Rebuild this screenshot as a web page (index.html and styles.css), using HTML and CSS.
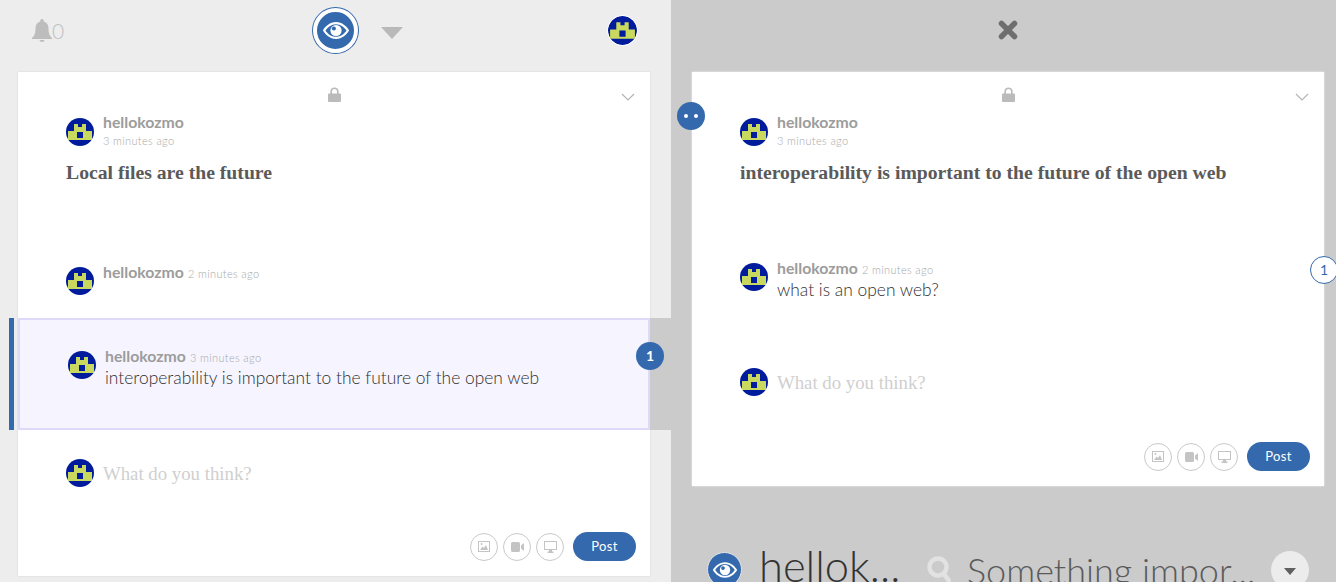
FILE: index.html
```html
<!DOCTYPE html>
<html lang="en">
<head>
    <meta charset="UTF-8">
    <title>Thread</title>
    <meta name="viewport" content="width=device-width, initial-scale=1">
    <link rel="stylesheet" href="styles.css">
</head>
<body>
    <svg class="defs" width="0" height="0">
        <symbol id="avatar" viewBox="0 0 28 28">
            <circle cx="14" cy="14" r="14" fill="#001b9c"/>
            <path fill="#c9d95f" d="M8 6h4v3h4V6h4v7h6v9H2v-9h6z"/>
            <path fill="#001b9c" d="M11 14h6v6h-6z"/>
        </symbol>
        <symbol id="eye" viewBox="0 0 30 20">
            <path fill="#fff" d="M15 1C8.500 1 3.500 5.500 1 10c2.500 4.500 7.500 9 14 9s11.500-4.500 14-9c-2.500-4.500-7.500-9-14-9zm0 2.200c5 0 9 3.300 11.300 6.800-2.300 3.500-6.300 6.800-11.300 6.800S6 13.500 3.700 10C6 6.500 10 3.200 15 3.200z"/>
            <circle cx="15" cy="10" r="6" fill="#fff"/>
            <circle cx="12.700" cy="7.800" r="2.200" fill="#346aad"/>
        </symbol>
        <symbol id="lock" viewBox="0 0 14 16">
            <path fill="#bbb" d="M1 7h1.500V4.800C2.500 2.200 4.500.5 7 .5s4.500 1.700 4.500 4.300V7H13a1 1 0 0 1 1 1v7a1 1 0 0 1-1 1H1a1 1 0 0 1-1-1V8a1 1 0 0 1 1-1zm3.300 0h5.400V4.800C9.700 3.200 8.500 2.200 7 2.200S4.300 3.200 4.300 4.800z"/>
        </symbol>
        <symbol id="chevron" viewBox="0 0 14 8">
            <path fill="none" stroke="#b5b5b5" stroke-width="1.200" d="M1 1l6 6 6-6"/>
        </symbol>
        <symbol id="picture" viewBox="0 0 12 11">
            <path fill="#c4c4c4" d="M0 0h12v11H0zm1 1v9h10V1z"/>
            <path fill="#c4c4c4" d="M2 9l2.500-3.500L6 7l2-3 2 5z"/>
            <circle cx="3.500" cy="3" r="1" fill="#c4c4c4"/>
        </symbol>
        <symbol id="video" viewBox="0 0 13 10">
            <path fill="#c4c4c4" d="M0 1.500A1.500 1.500 0 0 1 1.500 0h6A1.500 1.500 0 0 1 9 1.500v7A1.500 1.500 0 0 1 7.500 10h-6A1.500 1.500 0 0 1 0 8.500zM10 3.500L13 1v8l-3-2.500z"/>
        </symbol>
        <symbol id="screen" viewBox="0 0 13 12">
            <path fill="#c4c4c4" d="M0 0h13v9H8v1.500h1.500V12h-6v-1.500H5V9H0zm1 1v7h11V1z"/>
        </symbol>
    </svg>

    <div class="page">
        <div class="pane pane-left">
            <div class="topbar">
                <div class="alerts">
                    <svg class="bell" viewBox="0 0 20 23"><path fill="#bdbdbd" d="M10 0a1.800 1.800 0 0 1 1.800 1.800v.8C15 3.500 16.500 6 16.500 9.500c0 5 1 7 3.500 9.500v1H0v-1c2.500-2.500 3.500-4.500 3.500-9.500 0-3.500 1.500-6 4.700-6.900v-.8A1.800 1.800 0 0 1 10 0zM7.500 21h5a2.500 2 0 0 1-5 0z"/></svg>
                    <span class="alert-count">0</span>
                </div>
                <div class="persona">
                    <div class="eye-ring"><svg class="eye"><use href="#eye"/></svg></div>
                    <div class="caret"></div>
                </div>
                <svg class="me"><use href="#avatar"/></svg>
            </div>
            <div class="card">
                <div class="card-top">
                    <span></span>
                    <svg class="lock"><use href="#lock"/></svg>
                    <svg class="chevron"><use href="#chevron"/></svg>
                </div>
                <div class="post">
                    <svg class="avatar"><use href="#avatar"/></svg>
                    <div>
                        <div class="name">hellokozmo</div>
                        <div class="time">3 minutes ago</div>
                    </div>
                </div>
                <h2 class="title">Local files are the future</h2>
                <div class="comment comment-plain">
                    <svg class="avatar"><use href="#avatar"/></svg>
                    <div>
                        <span class="name">hellokozmo</span> <span class="time">2 minutes ago</span>
                    </div>
                </div>
                <div class="selected">
                    <svg class="avatar"><use href="#avatar"/></svg>
                    <div>
                        <span class="name">hellokozmo</span> <span class="time">3 minutes ago</span>
                        <div class="body">interoperability is important to the future of the open web</div>
                    </div>
                    <div class="link-strip"></div>
                    <div class="badge badge-solid">1</div>
                </div>
                <div class="composer">
                    <svg class="avatar"><use href="#avatar"/></svg>
                    <div class="placeholder">What do you think?</div>
                </div>
                <div class="actions">
                    <span class="tool"><svg class="ico-picture"><use href="#picture"/></svg></span>
                    <span class="tool"><svg class="ico-video"><use href="#video"/></svg></span>
                    <span class="tool"><svg class="ico-screen"><use href="#screen"/></svg></span>
                    <button class="post-btn">Post</button>
                </div>
            </div>
        </div>

        <div class="pane pane-right">
            <div class="topbar topbar-center">
                <svg class="close" viewBox="0 0 20 20"><path stroke="#6e6e6e" stroke-width="5.500" stroke-linecap="round" d="M3.500 3.500l13 13M16.500 3.500l-13 13"/></svg>
            </div>
            <div class="card card-right">
                <div class="badge badge-dots"><i></i><i></i></div>
                <div class="card-top">
                    <span></span>
                    <svg class="lock"><use href="#lock"/></svg>
                    <svg class="chevron"><use href="#chevron"/></svg>
                </div>
                <div class="post">
                    <svg class="avatar"><use href="#avatar"/></svg>
                    <div>
                        <div class="name">hellokozmo</div>
                        <div class="time">3 minutes ago</div>
                    </div>
                </div>
                <h2 class="title">interoperability is important to the future of the open web</h2>
                <div class="comment comment-reply">
                    <svg class="avatar"><use href="#avatar"/></svg>
                    <div>
                        <span class="name">hellokozmo</span> <span class="time">2 minutes ago</span>
                        <div class="body">what is an open web?</div>
                    </div>
                    <div class="badge badge-line">1</div>
                </div>
                <div class="composer composer-right">
                    <svg class="avatar"><use href="#avatar"/></svg>
                    <div class="placeholder">What do you think?</div>
                </div>
                <div class="actions actions-right">
                    <span class="tool"><svg class="ico-picture"><use href="#picture"/></svg></span>
                    <span class="tool"><svg class="ico-video"><use href="#video"/></svg></span>
                    <span class="tool"><svg class="ico-screen"><use href="#screen"/></svg></span>
                    <button class="post-btn">Post</button>
                </div>
            </div>
            <div class="bottombar">
                <div class="eye-small"><svg class="eye"><use href="#eye"/></svg></div>
                <span class="author-big">hellok...</span>
                <svg class="search" viewBox="0 0 24 30"><circle cx="11" cy="11" r="8.500" fill="none" stroke="#e2e2e2" stroke-width="4.500"/><path stroke="#e2e2e2" stroke-width="4.500" d="M16 17l7 9"/></svg>
                <span class="search-big">Something impor...</span>
                <div class="more"><div class="more-caret"></div></div>
            </div>
        </div>
    </div>
</body>
</html>
```

FILE: styles.css
```css
html, body { margin: 0; padding: 0; height: 100%; overflow: hidden; }
body { font-family: Lato, "Open Sans", sans-serif; color: #444; background: #cbcbcb; }
.defs { display: block; height: 0; }
.page { display: flex; height: 582px; overflow: hidden; }
.pane { height: 582px; box-sizing: border-box; flex: none; position: relative; }
.pane-left { width: 671px; background: #ededed; }
.pane-right { width: 665px; background: #cbcbcb; }

.topbar { height: 60px; margin-bottom: 12px; display: flex; align-items: center; padding: 0 33px 0 32px; box-sizing: border-box; }
.topbar-center { justify-content: center; padding: 0 0 0 8px; }
.alerts { display: flex; align-items: center; width: 281px; flex: none; }
.bell { width: 20px; height: 23px; }
.alert-count { font-size: 21px; font-weight: 300; color: #bfbfbf; line-height: 23px; }
.persona { display: flex; align-items: center; gap: 23px; flex: 1; }
.eye-ring { width: 37px; height: 37px; border-radius: 50%; border: 4px solid #fff; background: #346aad; box-shadow: 0 0 0 1px #346aad; display: flex; align-items: center; justify-content: center; }
.eye-ring .eye { width: 28px; height: 19px; }
.caret { width: 0; height: 0; border-left: 11px solid transparent; border-right: 11px solid transparent; border-top: 12px solid #b9b9b9; margin-top: 6px; }
.me { width: 29px; height: 29px; border: 1px solid #fff; border-radius: 50%; }
.close { width: 20px; height: 20px; }

.card { position: relative; background: #fff; width: 632px; margin-left: 18px; height: 504px; box-shadow: 0 0 2px rgba(0,0,0,0.1); }
.card-right { margin-left: 21px; height: 414px; width: 632px; box-shadow: 0 0 2px rgba(255,255,255,0.7); }
.card-top { display: grid; grid-template-columns: 1fr auto 1fr; height: 46px; padding-top: 15px; box-sizing: border-box; }
.lock { width: 13px; height: 15px; }
.chevron { width: 14px; height: 8px; justify-self: end; margin: 6px 15px 0 0; }

.avatar { width: 28px; height: 28px; flex: none; }
.post { display: flex; gap: 9px; padding-left: 48px; height: 28px; }
.name { font-size: 15.800px; font-weight: 700; color: #9c9c9c; line-height: 16px; margin-top: -4px; }
.post .time { line-height: 14px; margin-top: 4px; }
span.name { margin-top: 0; display: inline; }
.time { font-size: 11px; font-weight: 300; color: #a8a8a8; letter-spacing: 0.35px; }
.title { font-family: "Liberation Serif", serif; font-weight: 700; font-size: 19.700px; line-height: 22px; color: #5a5a5a; margin: 15px 0 0 48px; }
.body { font-size: 17.400px; font-weight: 300; line-height: 22px; color: #2f2f2f; margin-top: 1px; }

.comment { display: flex; gap: 9px; padding-left: 48px; position: relative; }
.comment > div { line-height: 16px; margin-top: -3px; }
.comment-plain { margin-top: 84px; height: 51px; }
.comment-reply { margin-top: 80px; height: 105px; }

.selected { position: relative; display: flex; gap: 9px; box-sizing: border-box; height: 112px; padding: 31px 0 0 48px; background: #f6f5ff; border: 2px solid #dcdaf8; }
.selected::before { content: ""; position: absolute; left: -11px; top: -2px; bottom: -2px; width: 5px; background: #346aad; }
.selected > div:nth-child(2) { line-height: 16px; margin-top: -3px; }
.link-strip { position: absolute; left: 630px; top: -2px; width: 21px; height: 112px; background: #cbcbcb; }

.badge { position: absolute; width: 28px; height: 28px; border-radius: 50%; box-sizing: border-box; display: flex; align-items: center; justify-content: center; font-size: 14px; font-weight: 700; line-height: 1; }
.badge-solid { left: 616px; top: 22px; background: #346aad; color: #fff; }
.badge-line { left: 618px; top: -7px; background: #fff; color: #346aad; border: 1px solid #346aad; font-weight: 400; }
.comment > .badge-line { margin-top: 0; top: -7px; }
.badge-dots { left: -15px; top: 30px; background: #346aad; gap: 6px; z-index: 1; }
.badge-dots i { width: 4px; height: 4px; border-radius: 50%; background: #fff; display: block; }

.composer { display: flex; gap: 9px; padding-left: 48px; margin-top: 29px; }
.composer-right { margin-top: 0; }
.placeholder { font-family: "Liberation Serif", serif; font-size: 18.800px; color: #cfcfcf; line-height: 28px; margin-top: 1px; }
.actions { display: flex; align-items: center; justify-content: flex-end; gap: 5px; margin-top: 44px; padding-right: 14px; }
.actions-right { margin-top: 45px; }
.tool { width: 28px; height: 28px; box-sizing: border-box; border: 1px solid #c9c9c9; border-radius: 50%; display: flex; align-items: center; justify-content: center; }
.ico-picture { width: 12px; height: 11px; }
.ico-video { width: 13px; height: 10px; }
.ico-screen { width: 13px; height: 12px; }
.post-btn { width: 63px; height: 29px; margin-left: 4px; border: none; border-radius: 15px; background: #346aad; color: #fff; font-family: Lato, sans-serif; font-size: 13px; font-weight: 400; letter-spacing: 0.4px; padding: 0 0 1px; }

.bottombar { display: flex; align-items: flex-start; margin-top: 66px; padding-left: 36px; height: 40px; }
.eye-small { width: 35px; height: 35px; flex: none; border: 1px solid #e6e6e6; box-sizing: border-box; border-radius: 50%; background: #346aad; display: flex; align-items: center; justify-content: center; }
.eye-small .eye { width: 26px; height: 18px; }
.author-big { font-size: 43.500px; font-weight: 300; color: #333; line-height: 52px; margin: -13px 0 0 17px; width: 168px; white-space: nowrap; }
.search { width: 24px; height: 30px; margin-top: 4px; flex: none; }
.search-big { font-size: 36px; font-weight: 300; color: #5a5a5a; line-height: 46px; margin-left: 16px; width: 304px; white-space: nowrap; margin-top: -5px; }
.more { width: 38px; height: 38px; flex: none; border-radius: 50%; background: #ececec; display: flex; align-items: center; justify-content: center; margin-top: -1px; }
.more-caret { width: 0; height: 0; border-left: 6px solid transparent; border-right: 6px solid transparent; border-top: 7px solid #5f5f5f; margin-top: 2px; }
```
